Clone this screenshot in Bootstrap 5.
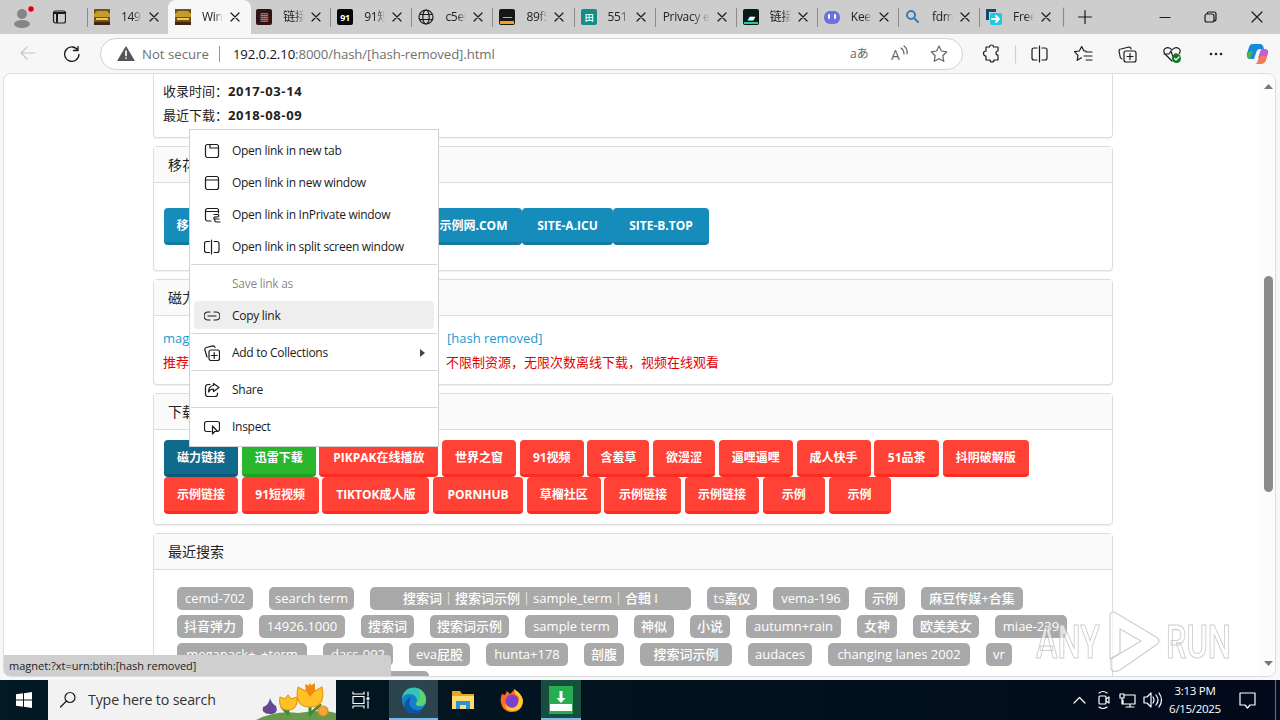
<!DOCTYPE html>
<html lang="zh-CN">
<head>
  <meta charset="UTF-8" />
  <meta name="viewport" content="width=device-width, initial-scale=1.0"/>
  <title>Browser window</title>
  <link href="https://cdn.jsdelivr.net/npm/bootstrap@5.3.0/dist/css/bootstrap.min.css" rel="stylesheet" />
  <style>
    body {
      width: 1280px;
      height: 720px;
      overflow: hidden;
      background: #f7f7f7;
      color: #222;
      font-family: "Open Sans", "Noto Sans CJK SC", sans-serif;
      font-size: 13px;
      line-height: 24px;
    }
    svg { display: block; flex: none; fill: none; stroke: #1b1b1b; stroke-width: 1.2; stroke-linecap: round; stroke-linejoin: round; }

    /* tab strip */
    .strip { height: 34px; background: #cdcdcd; }
    .strip-left { width: 87px; }
    .tab { width: 81.1px; height: 34px; padding-left: 7px; font-size: 12px; letter-spacing: -.3px; color: #222; position: relative; }
    .tab::before { content: ""; position: absolute; left: 0; top: 8px; width: 1px; height: 19px; background: #8b8b8b; }
    .tab.on, .tab.after-on { z-index: 1; }
    .tab.on::before, .tab.after-on::before { display: none; }
    .tab.on { z-index: 2; }
    .tab.on::after { content: ""; position: absolute; z-index: -1; left: 0; top: 0; width: 83px; height: 34px; background: #f7f7f7; border-radius: 8px 8px 0 0; }
    .tab-title { width: 21px; margin-left: 11px; overflow: hidden; white-space: nowrap; -webkit-mask-image: linear-gradient(90deg, #000 60%, transparent); }
    .tab.no-icon .tab-title { width: 47px; margin-left: 1px; }
    .tab-x { margin-left: 6px; }

    /* toolbar */
    .tools { height: 39px; background: #f7f7f7; }
    .address { width: 863px; height: 32px; border: 1px solid #d2d2d2; border-radius: 16px; background: #fff; font-size: 13.2px; color: #707070; margin-left: 19px; }
    .address .host { color: #111; }
    .address .bar { width: 1px; height: 16px; background: #999; margin: 0 13px 0 10px; }
    .url { letter-spacing: -.1px; white-space: nowrap; width: 480px; }

    /* page */
    .view { height: 604px; margin: 0 4px 0 3px; background: #fff; border: 1px solid #ddd; border-radius: 8px; overflow: hidden; position: relative; }
    .content { width: 960px; margin-left: 149px; }
    .panel { border: 1px solid #ddd; border-radius: 4px; box-shadow: 0 1px 1px rgba(0,0,0,.06); margin-bottom: 8px; background: #fff; }
    .panel-top { height: 36px; padding-left: 14px; line-height: 36px; background: #fafafa; border-bottom: 1px solid #ddd; font-size: 14px; }
    .panel b { color: #222; font-weight: 700; letter-spacing: .65px; }
    .p-first { height: 64px; border-top: 0; border-radius: 0 0 4px 4px; padding: 5px 9px; }
    .p-sites { height: 125px; }
    .p-magnet { height: 106px; }
    .p-down { height: 132px; }
    .p-search { height: 200px; }
    .push { height: 37px; border-radius: 4px; border-bottom: 3px solid #ff2a20; background: #ff4136; color: #fff; font-size: 12px; font-weight: 700; line-height: 36px; white-space: nowrap; text-align: center; }
    .push.blue { background: #158cba; border-color: #127ba3; }
    .push.deep { background: #106a8c; border-color: #0d5875; }
    .push.green { background: #28b62c; border-color: #23a127; }
    .chips { gap: 16px; height: 23px; margin-bottom: 5px; }
    .chip { height: 23px; line-height: 22px; border-radius: 5px; background: #a9a9a9; color: #fff; font-size: 13px; font-weight: 500; text-align: center; white-space: nowrap; flex: none; }
    .magnet { color: #1a9bd0; white-space: nowrap; }
    .warn { color: #e00000; }

    /* overlays */
    .scroll { position: absolute; right: 0; top: 0; width: 15px; height: 604px; background: #fcfcfc; }
    .thumb { position: absolute; left: 4px; top: 202px; width: 9px; height: 216px; border-radius: 5px; background: #8b8b8b; }
    .status { position: absolute; left: 4px; top: 655px; width: 387px; height: 21px; padding-left: 5px; background: #cfcfcf; border-radius: 0 4px 0 6px; color: #222; font-size: 11px; line-height: 21px; white-space: nowrap; }
    .ctx { position: absolute; left: 189px; top: 129px; width: 250px; height: 318px; background: #fff; border: 1px solid #d0d0d0; padding-top: 5px; font-size: 12px; letter-spacing: -.28px; color: #1b1b1b; }
    .ctx-row { height: 32px; padding-left: 14px; gap: 12px; position: relative; }
    .ctx-row.hot::before { content: ""; position: absolute; left: 4px; right: 4px; top: 1px; height: 28px; border-radius: 4px; background: #eee; }
    .ctx-row > * { position: relative; }
    .ctx-line { height: 1px; margin: 1px 1px 3px; background: #d6d6d6; }
    .logo-over { position: absolute; left: 1036px; top: 606px; opacity: .65; }

    /* taskbar */
    .task { position: absolute; left: 0; top: 680px; width: 1280px; height: 40px; background: linear-gradient(90deg, #021a24, #02131e 50%, #020a1b); color: #fff; }
    .find { width: 288px; height: 40px; background: #f2f2f2; color: #333; font-size: 14.2px; letter-spacing: -.15px; padding-left: 11px; }
    .slot { width: 49px; height: 40px; }
    .slot.live { background: #2c444e; box-shadow: inset 0 -2px #76b9ed; }
    .clock { width: 64px; font-size: 11.5px; line-height: 18px; letter-spacing: -.3px; text-align: center; }
  </style>
</head>
<body>
  <div class="strip d-flex">
    <div class="strip-left d-flex align-items-center">
      <svg width="34" height="34" class="ms-2"><g fill="#858585" stroke="none"><circle cx="14" cy="14" r="5"/><ellipse cx="14" cy="24" rx="8" ry="4"/></g><circle cx="23" cy="9" r="3.300" fill="#d90016" stroke="#eec0c4"/></svg>
      <svg width="16" height="16" class="ms-2"><rect x="3.500" y="2" width="12" height="12" rx="2"/><path d="M4 4h11M7 5v8" stroke-width="2"/></svg>
    </div>
    <div id="tabs" class="d-flex"></div>
    <svg width="219" height="34"><path stroke="#8b8b8b" d="M3.500 8v18"/><path d="M18.500 17h13M25 10.500v13"/><path d="M100 17.500h10M147 14a2 2 0 0 1 2-2h5a2 2 0 0 1 2 2v5a2 2 0 0 1-2 2M147 14h5a2 2 0 0 1 2 2v4a2 2 0 0 1-2 2h-5a2 2 0 0 1-2-2v-4a2 2 0 0 1 2-2M192 12l10 10M202 12l-10 10"/></svg>
  </div>

  <div class="tools d-flex align-items-center">
    <svg width="81" height="38"><path stroke="#c5c5c5" d="M35 18H21m6-6-6 6 6 6"/><path stroke-width="1.300" d="M78 11.500v4h-4.500M78 15.500a7.200 7.200 0 1 0 1 4"/></svg>
    <div class="address d-flex align-items-center">
      <svg width="18" height="17" class="ms-3"><path d="M9 2 17 15.500H1z" fill="#555" stroke="#555"/><path stroke="#fff" stroke-width="1.700" d="M9 6v4.500M9 13v.1"/></svg>
      <span style="margin-left:7px">Not secure</span><span class="bar"></span>
      <span class="url"><span class="host">192.0.2.10</span>:8000/hash/[hash-removed].html</span>
      <svg width="112" height="30" class="ms-auto me-0" stroke="#666"><text x="0" y="19" font-size="12" fill="#666" stroke="none">aあ</text><text x="41" y="21" font-size="14" fill="#666" stroke="none">A</text><path stroke="#666" d="M51 9q3 2 3 6M54 7q4 3 3 8M89 7l2.400 5 5.400.8-4 3.900 1 5.600-4.800-2.600-4.800 2.600 1-5.600-4-3.900 5.400-.8z"/></svg>
    </div>
    <svg width="317" height="38">
      <path d="M23 12h3.500a2 2 0 1 1 4 0H35v4a2 2 0 1 0 0 4v5h-4a2 2 0 1 1-4 0h-4v-4a2 2 0 1 1 0-5z"/>
      <path stroke="#d0d0d0" d="M52.500 11v17"/>
      <path d="M74 13h-3a2 2 0 0 0-2 2v8a2 2 0 0 0 2 2h3M79 13h3a2 2 0 0 1 2 2v8a2 2 0 0 1-2 2h-3M76.500 11v16"/>
      <path d="M123 16h-2l-2.300-4.500-2.400 4.500-4.800.7 3.500 3.600-.8 5 4.300-2.500M123 17h6M121 21h8M123 25h6"/>
      <rect x="161" y="16" width="12" height="11" rx="2"/><path d="M167 18.500v6M164 21.500h6M159 24a3 3 0 0 1-2-3l-1-5a2 2 0 0 1 2-2l8-2a2 2 0 0 1 2 2"/>
      <path d="m209 26-7-7c-4-5 3-9 7-4 4-5 11-1 7 4M201 19h5l2-3 2 6 2-3h2"/><circle cx="213.500" cy="23.500" r="4.500" fill="#0b7a20" stroke="none"/><path stroke="#fff" d="m211.500 23.500 1.500 1.500 3-3"/>
      <g fill="#222" stroke="none"><circle cx="248" cy="19" r="1.300"/><circle cx="253" cy="19" r="1.300"/><circle cx="258" cy="19" r="1.300"/></g>
      <path stroke="none" fill="#168bd8" d="M289 9h8q3 0 4 5h-4q-3 0-4 4l-2 6h-3q-5 0-4-5l2-7q1-3 3-3z"/><path stroke="none" fill="#4cb34b" d="m284 17 6-1-3 8q-4 0-3-7z"/><path stroke="none" fill="#c85be0" d="M298 14h4q4 0 3 5l-2 5-8-1z"/><path stroke="none" fill="#f47b55" d="M292 29h6q4 0 5-4l1-4h-5q-3 0-4 4-1 4-3 4z"/>
    </svg>
  </div>

  <div class="view">
    <div class="content">
      <div class="panel p-first">
        <div>收录时间：<b>2017-03-14</b></div>
        <div>最近下载：<b>2018-08-09</b></div>
      </div>
      <div class="panel p-sites">
        <div class="panel-top">移花</div>
        <div class="d-flex" id="sites" style="padding:25px 10px"></div>
      </div>
      <div class="panel p-magnet">
        <div class="panel-top">磁力</div>
        <div style="padding:10px 9px">
          <div class="magnet d-flex"><span style="width:284px">magnet:</span>[hash removed]</div>
          <div class="warn d-flex"><span style="width:283px">推荐</span>不限制资源，无限次数离线下载，视频在线观看</div>
        </div>
      </div>
      <div class="panel p-down">
        <div class="panel-top">下载</div>
        <div id="links" style="padding:10px"></div>
      </div>
      <div class="panel p-search">
        <div class="panel-top">最近搜索</div>
        <div id="terms" style="padding:17px 23px"></div>
      </div>
    </div>
    <div class="scroll"><div class="thumb"></div>
      <svg width="15" height="602"><path fill="#777" stroke="none" d="M4 15l4.500-5 4.500 5zM4 587l4.500 5 4.500-5z"/></svg>
    </div>
  </div>

  <svg class="logo-over" width="200" height="70"><g fill="#fff" stroke="#b5b5b5" stroke-width="1.200" font-family="Roboto" font-weight="500" font-size="46"><text x="0" y="52" textLength="64" lengthAdjust="spacingAndGlyphs">ANY</text><text x="130" y="52" textLength="65" lengthAdjust="spacingAndGlyphs">RUN</text><path d="M74 10q0-6 6-3l40 24q6 4 0 8L84 64q-9 4-9-3v-8l30-18-21-12v24l-10 6z"/></g></svg>
  <div class="status">magnet:?xt=urn:btih:[hash removed]</div>

  <div class="ctx">
    <div class="ctx-row d-flex align-items-center"><svg width="16" height="16"><rect x="1.500" y="1.500" width="13" height="13" rx="2"/><path d="M6 2v3h8"/></svg><span>Open link in new tab</span></div>
    <div class="ctx-row d-flex align-items-center"><svg width="16" height="16"><rect x="1.500" y="1.500" width="13" height="13" rx="2"/><path d="M2 5h12"/></svg><span>Open link in new window</span></div>
    <div class="ctx-row d-flex align-items-center"><svg width="17" height="16" style="margin-right:-1px"><path d="M7 14H3.500a2 2 0 0 1-2-2V3.500a2 2 0 0 1 2-2h9a2 2 0 0 1 2 2V6M2 4.500h12M10 7.500h4q2 2-1 2.500-4-.5-3 2h5M11 12q-1 3 2 3h3"/></svg><span>Open link in InPrivate window</span></div>
    <div class="ctx-row d-flex align-items-center"><svg width="16" height="16"><path d="M5.500 2.500h-3a2 2 0 0 0-2 2v7a2 2 0 0 0 2 2h3M10 2.500h3a2 2 0 0 1 2 2v7a2 2 0 0 1-2 2h-3M7.500 1v14"/></svg><span>Open link in split screen window</span></div>
    <div class="ctx-line"></div>
    <div class="ctx-row d-flex align-items-center text-black-50"><svg width="16" height="16"></svg><span>Save link as</span></div>
    <div class="ctx-row hot d-flex align-items-center"><svg width="16" height="16"><path d="M6 4H4a4 4 0 0 0 0 8h2M10 4h2a4 4 0 0 1 0 8h-2M4 8h8"/></svg><span>Copy link</span></div>
    <div class="ctx-line"></div>
    <div class="ctx-row d-flex align-items-center"><svg width="16" height="16"><rect x="5" y="5" width="10.500" height="10.500" rx="2"/><path d="M10.200 7.500v6M7.200 10.500h6M3 12 .8 4.500a2 2 0 0 1 1.500-2L9 .8a2 2 0 0 1 2 1.500"/></svg><span>Add to Collections</span><svg width="8" height="10" class="ms-auto me-2" style="right:4px"><path fill="#444" stroke="none" d="M2 1v8l5-4z"/></svg></div>
    <div class="ctx-line"></div>
    <div class="ctx-row d-flex align-items-center"><svg width="16" height="16"><path d="M6 2.500H4a2.500 2.500 0 0 0-2.500 2.500v7A2.500 2.500 0 0 0 4 14.500h7a2.500 2.500 0 0 0 2.500-2.500v-1M9.500 1.500 15 5.500l-5.500 4V7Q6 7 4.500 10q0-6 5-6.500z"/></svg><span>Share</span></div>
    <div class="ctx-line"></div>
    <div class="ctx-row d-flex align-items-center"><svg width="16" height="16"><path d="M7 12.500H2.500a2 2 0 0 1-2-2v-6a2 2 0 0 1 2-2h11a2 2 0 0 1 2 2v6q0 1-1 1.500M8.500 7v8l2.200-2.500h3z"/></svg><span>Inspect</span></div>
  </div>

  <div class="task d-flex align-items-center">
    <div class="slot d-flex align-items-center" style="padding-left:16px;width:48px"><svg width="16" height="16"><path fill="#fff" stroke="none" d="M0 2.300 7 1.300v6.200H0zM8 1.200 16 0v7.500H8zM0 8.500h7v6.200l-7-1zM8 8.500h8V16l-8-1.200z"/></svg></div>
    <div class="find d-flex align-items-center">
      <svg width="18" height="18"><circle cx="11" cy="6.500" r="5"/><path d="m7.500 10-6 6"/></svg><span style="margin-left:11px">Type here to search</span>
      <svg width="80" height="40" class="ms-auto"><path fill="#679b4b" stroke="none" d="M0 40q20-10 42-7 25-4 38 0v7z"/><path stroke="#3e8c35" stroke-width="3" d="M32 34V22M54 35V18M54 34l10-9M32 34l-6-7"/><path fill="#ffc125" stroke="#e79a12" d="M24 17l5 2 3-4 3 4 6-2q1 13-9 13t-8-13zM42 7l7 4 5-7 5 7 7-4q4 20-12 20T42 7z"/><path fill="#f28a10" stroke="none" d="M50 11l-1-7 5 2 5-3v8l-5 6z"/><path fill="#674793" stroke="none" d="M14 18q2 6 6 8 3 8-6 8t-7-7q6-2 7-9z"/><circle cx="67" cy="31" r="5" fill="#f5a735" stroke="#e3871b"/></svg>
    </div>
    <div class="slot d-flex align-items-center justify-content-center"><svg width="18" height="18"><path stroke="#fff" d="M1 1v2h11V1M1 5.500h11v7H1zM1 17v-2h11v2M16 1v4M16 10v7"/><circle cx="16" cy="7.500" r="1" fill="#fff" stroke="#fff"/></svg></div>
    <div class="slot live d-flex align-items-center justify-content-center ms-1 me-n1"><svg width="26" height="26"><g stroke="none"><circle cx="13" cy="13" r="12" fill="#157fc8"/><path fill="#37c3b5" d="M1 12C2-4 25-3 25 13q0 7-8 6-4-1-1-4 0-8-8-8-5 0-7 5z"/><path fill="#58d56c" d="M17 2q8 3 8 11 0 6-7 6-5-1-2-4 5-5 1-13z"/><path fill="#0e55a4" d="M10 10q-5 10 5 13 5 1 8-3-10 15-19 2-2-9 6-12z"/></g></svg></div>
    <div class="slot d-flex align-items-center justify-content-center"><svg width="22" height="20"><path fill="#e9a528" stroke="none" d="M0 1h8l2 3h12v15H0z"/><path fill="#ffda70" stroke="none" d="M0 6h22v13H0z"/><path fill="#2b92d6" stroke="none" d="M4 11h14v8h-4v-4H8v4H4z"/></svg></div>
    <div class="slot d-flex align-items-center justify-content-center"><svg width="24" height="24"><path fill="#ff6b1e" stroke="none" d="M2 6l3 1 2-4 3 3 5-5q1 4 5 6 3 4 3 8-2 9-11 9T1 15q-1-5 1-9z"/><circle cx="12" cy="13" r="6.500" fill="#7b41cf" stroke="none"/><path fill="#ffcd32" stroke="none" d="M14 1q1 6 5 8 0 10-6 11-6 0-8-4 0 7 8 7 10-1 10-11-1-6-9-11z"/></svg></div>
    <div class="slot d-flex align-items-center justify-content-center" style="background:#174e3e;width:40px;margin-left:5px;box-shadow:inset 0 -2px #76b9ed"><svg width="24" height="28"><path fill="#26ad50" stroke="none" d="M0 0h24v28H0z"/><path fill="#fff" stroke="none" d="M1 18h22v7H1zM10.500 5h3v7h3L12 17l-4.500-5h3z"/></svg></div>
    <svg width="93" height="40" class="ms-auto"><g stroke="#fff"><path d="m4 23 5.500-5.500L15 23"/><rect x="29" y="16" width="7" height="8" rx="1"/><path d="m36 19 3-2v6l-3-2M29 13q4-3 8 0M29 27q4 3 8 0"/><path d="M54 15h11v9H53v-4M60 24v3M56 27h8M50 14h4v4h-4zM52 18v6M74 17h3l4-4v14l-4-4h-3zM83 17q2 3 0 6M86 15q4 5 0 10M89 13q5 7 0 14"/></g></svg>
    <div class="clock">3:13 PM<br>6/15/2025</div>
    <svg width="53" height="40"><path stroke="#fff" d="M13 13h15v12h-5l-2.500 3-2.500-3h-5z"/><path stroke="#667" d="M48.500 0v40"/></svg>
  </div>

  <script src="https://cdn.jsdelivr.net/npm/bootstrap@5.3.0/dist/js/bootstrap.bundle.min.js"></script>
  <script>
    const gold = '<path fill="#6c5518" stroke="none" d="M0 0h16v16H0z"/><path fill="#c79b28" stroke="none" d="M0 5l3-3h10l3 3v3H0z"/><path fill="#edc64d" stroke="none" d="M2 9h12v2H2z"/><path fill="#48230f" stroke="none" d="M0 13h16v3H0z"/>';
    const tile = (bg, fg, t) => `<rect width="16" height="16" rx="2" fill="${bg}" stroke="none"/><text x="8" y="11.500" font-size="9" font-weight="700" text-anchor="middle" fill="${fg}" stroke="none">${t}</text>`;
    const tabs = [
      [gold, "149."], [gold, "Win"],
      [tile("#301318", "#ddb0ac", "▦"), "链接"],
      [tile("#050809", "#fff", "91"), "91短"],
      ['<circle cx="8" cy="8" r="7"/><ellipse cx="8" cy="8" rx="3.200" ry="7"/><path d="M2 5.500h12M2 10.500h12"/>', "c5el"],
      [tile("#171717", "#f6a313", "━") + '<path fill="#f6a313" stroke="none" d="M1 12h14v3H1z"/>', "89f5"],
      [tile("#168c88", "#d6fffa", "田"), "551"],
      [null, "Privacy e"],
      [tile("#07191b", "#e6fff8", "▰") + '<path fill="#20cba4" stroke="none" d="M1 13h14v2H1z"/>', "链接"],
      ['<rect y="2" width="16" height="13" rx="6" fill="#6d70df" stroke="none"/><path stroke="#fff" stroke-width="2" d="M5 6v3M11 6v3"/>', "Kee"],
      ['<circle cx="6" cy="6" r="4" stroke="#327ec2" stroke-width="2"/><path stroke="#327ec2" stroke-width="2" d="m9 9 4 4"/>', "fdm"],
      ['<path fill="#164b67" stroke="none" d="M0 0h10v3H3v8H0z"/><rect x="4" y="4" width="12" height="12" rx="2" fill="#20c9de" stroke="none"/><path stroke="#fff" stroke-width="1.800" d="M6 10h7m-3-3 3 3-3 3"/>', "Free"]
    ];
    document.getElementById("tabs").innerHTML = tabs.map(([icon, title], i) => `
      <div class="tab d-flex align-items-center ${i === 1 ? "on" : ""} ${i === 2 ? "after-on" : ""} ${icon ? "" : "no-icon"}">
        ${icon ? `<svg width="16" height="16">${icon}</svg>` : ""}
        <span class="tab-title">${title}</span>
        <svg class="tab-x" width="12" height="12"><path d="m2 2 8 8M10 2l-8 8"/></svg>
      </div>`).join("");

    // [label, width, colour]
    const push = ([text, w, tone = ""]) => `<div class="push ${tone}" style="width:${w}px">${text}</div>`;
    document.getElementById("sites").innerHTML = [
      ["移花", 49, "blue"], ["", 212, "blue"], ["示例网.COM", 97, "blue"], ["SITE-A.ICU", 91, "blue"], ["SITE-B.TOP", 96, "blue"]
    ].map(push).join("");

    const links = [
      [["磁力链接", 74, "deep"], ["迅雷下载", 74, "green"], ["PIKPAK在线播放", 119], ["世界之窗", 74], ["91视频", 64], ["含羞草", 62], ["欲漫涩", 62], ["逼哩逼哩", 74], ["成人快手", 74], ["51品茶", 65], ["抖阴破解版", 86]],
      [["示例链接", 74], ["91短视频", 77], ["TIKTOK成人版", 107], ["PORNHUB", 90], ["草榴社区", 74], ["示例链接", 77], ["示例链接", 74], ["示例", 62], ["示例", 62]]
    ];
    document.getElementById("links").innerHTML = links.map(r => `<div class="d-flex" style="gap:3.700px">${r.map(push).join("")}</div>`).join("");

    const terms = [
      [["cemd-702", 76], ["search term", 85], ["搜索词｜搜索词示例｜sample_term｜合輯 I", 321], ["ts嘉仪", 50], ["vema-196", 76], ["示例", 40], ["麻豆传媒+合集", 102]],
      [["抖音弹力", 66], ["14926.1000", 86], ["搜索词", 53], ["搜索词示例", 79], ["sample term", 93], ["神似", 40], ["小说", 40], ["autumn+rain", 95], ["女神", 40], ["欧美美女", 66], ["miae-239", 72]],
      [["megapack+_+term", 130], ["dass-092", 70], ["eva屁股", 61], ["hunta+178", 82], ["剖腹", 40], ["搜索词示例", 92], ["audaces", 64], ["changing lanes 2002", 142], ["vr", 26]],
      [["", 252]]
    ];
    document.getElementById("terms").innerHTML = terms.map(r => `<div class="chips d-flex">${r.map(([t, w]) => `<span class="chip" style="width:${w}px">${t}</span>`).join("")}</div>`).join("");
  </script>
</body>
</html>
